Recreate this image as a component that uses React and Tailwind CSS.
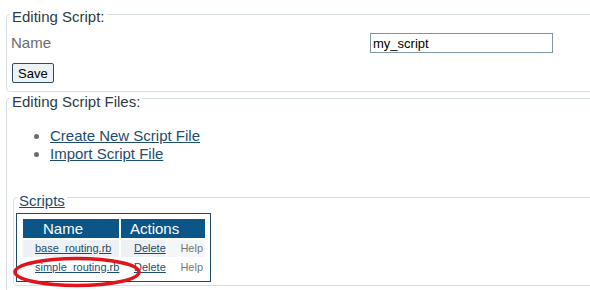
import React from 'react';

const Legend = ({ children, className = '' }) => (
  <legend className={`ml-[3px] px-[2px] text-[15px] leading-[14px] ${className}`}>
    <span className="relative top-[3px]">{children}</span>
  </legend>
);

const scripts = [
  { name: 'base_routing.rb', shaded: true },
  { name: 'simple_routing.rb', shaded: false },
];

const App = () => {
  return (
    <div className="relative w-[590px] h-[290px] overflow-hidden bg-white font-['Liberation_Sans',Arial,sans-serif]">
      {/* Editing Script */}
      <fieldset className="mt-[7px] ml-[6px] w-[640px] border border-[#d7dee2] rounded-[4px] pb-[6px]">
        <Legend className="text-[#2e3b45]">Editing Script:</Legend>
        <div className="mt-[12px] flex items-center h-[20px]">
          <label className="pl-[4px] w-[363px] text-[15px] text-[#6b6b6b]">Name</label>
          <input
            type="text"
            defaultValue="my_script"
            className="w-[183px] h-[20px] border border-[#7f96a3] px-[2px] text-[13px] text-black outline-none"
          />
        </div>
        <button className="mt-[10px] ml-[5px] h-[20px] px-[5px] border border-[#2f4c60] rounded-[2px] bg-[#edf2f5] text-[13px] text-black leading-none">
          Save
        </button>
      </fieldset>

      {/* Editing Script Files */}
      <fieldset className="ml-[6px] w-[640px] border border-[#d7dee2] rounded-[4px] pb-[20px]">
        <Legend className="text-[#2e3b45]">Editing Script Files:</Legend>
        <ul className="mt-[21px] pl-[43px] list-disc text-[15px] leading-[18px] text-[#6b6b6b]">
          <li>
            <a href="#" className="text-[#1d4c6c] underline">Create New Script File</a>
          </li>
          <li>
            <a href="#" className="text-[#1d4c6c] underline">Import Script File</a>
          </li>
        </ul>

        {/* Scripts */}
        <fieldset className="mt-[28px] ml-[6px] w-[640px] border border-[#d7dee2] rounded-[4px] pb-[3px]">
          <Legend>
            <a href="#" className="text-[#1d4c6c] underline">Scripts</a>
          </Legend>
          <div className="mt-[8px] ml-[2px] w-fit border border-[#1f4a64] pl-[6px] pr-[5px] pt-[5px] pb-[5px]">
            <div className="grid grid-cols-[96px_44px_38px] gap-[2px]">
              <div className="h-[19px] bg-[#0b5587] text-white text-[15px] leading-[19px] pl-[20px]">Name</div>
              <div className="col-span-2 h-[19px] bg-[#0b5587] text-white text-[15px] leading-[19px] pl-[9px]">Actions</div>
              {scripts.map((s) => (
                <React.Fragment key={s.name}>
                  <div className={`h-[17px] pl-[12px] whitespace-nowrap text-[11px] leading-[17px] ${s.shaded ? 'bg-[#eef1f4]' : 'bg-white'}`}>
                    <a href="#" className="text-[#1d4c6c] underline">{s.name}</a>
                  </div>
                  <div className={`h-[17px] pl-[13px] text-[11px] leading-[17px] ${s.shaded ? 'bg-[#eef1f4]' : 'bg-white'}`}>
                    <a href="#" className="text-[#1d4c6c] underline">Delete</a>
                  </div>
                  <div className={`h-[17px] pr-[2px] text-right text-[11px] leading-[17px] text-[#777] ${s.shaded ? 'bg-[#f4f6f8]' : 'bg-white'}`}>
                    Help
                  </div>
                </React.Fragment>
              ))}
            </div>
          </div>
        </fieldset>
      </fieldset>

      {/* red annotation ellipse */}
      <svg className="absolute left-[13px] top-[256px] pointer-events-none" width="132" height="34" viewBox="0 0 132 34">
        <ellipse cx="64" cy="16" rx="62" ry="13.5" fill="none" stroke="#e0141c" strokeWidth="3.5" />
      </svg>
    </div>
  );
};

export default App;
